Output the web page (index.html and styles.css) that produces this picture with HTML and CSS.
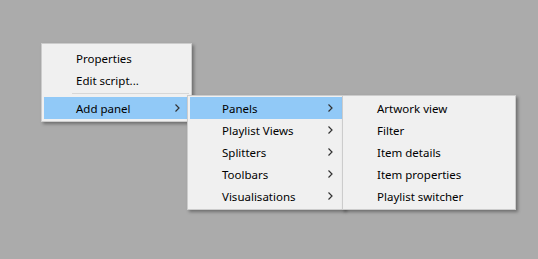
FILE: index.html
```html
<!DOCTYPE html>
<html>
<head>
<meta charset="utf-8">
<link rel="stylesheet" href="styles.css">
</head>
<body>
<div class="canvas">
  <div class="menu menu-main">
    <div class="item"><span class="label">Properties</span></div>
    <div class="item"><span class="label">Edit script...</span></div>
    <div class="sep"></div>
    <div class="item active"><span class="label">Add panel</span>
      <svg class="arrow" width="5" height="8" viewBox="0 0 5 8"><path d="M0.5 0.5 L4 4 L0.5 7.5" fill="none" stroke="#333" stroke-width="1.2"/></svg>
    </div>
  </div>
  <div class="menu menu-sub">
    <div class="item active"><span class="label">Panels</span>
      <svg class="arrow" width="5" height="8" viewBox="0 0 5 8"><path d="M0.5 0.5 L4 4 L0.5 7.5" fill="none" stroke="#333" stroke-width="1.2"/></svg>
    </div>
    <div class="item"><span class="label">Playlist Views</span>
      <svg class="arrow" width="5" height="8" viewBox="0 0 5 8"><path d="M0.5 0.5 L4 4 L0.5 7.5" fill="none" stroke="#333" stroke-width="1.2"/></svg>
    </div>
    <div class="item"><span class="label">Splitters</span>
      <svg class="arrow" width="5" height="8" viewBox="0 0 5 8"><path d="M0.5 0.5 L4 4 L0.5 7.5" fill="none" stroke="#333" stroke-width="1.2"/></svg>
    </div>
    <div class="item"><span class="label">Toolbars</span>
      <svg class="arrow" width="5" height="8" viewBox="0 0 5 8"><path d="M0.5 0.5 L4 4 L0.5 7.5" fill="none" stroke="#333" stroke-width="1.2"/></svg>
    </div>
    <div class="item"><span class="label">Visualisations</span>
      <svg class="arrow" width="5" height="8" viewBox="0 0 5 8"><path d="M0.5 0.5 L4 4 L0.5 7.5" fill="none" stroke="#333" stroke-width="1.2"/></svg>
    </div>
  </div>
  <div class="menu menu-panels">
    <div class="item"><span class="label">Artwork view</span></div>
    <div class="item"><span class="label">Filter</span></div>
    <div class="item"><span class="label">Item details</span></div>
    <div class="item"><span class="label">Item properties</span></div>
    <div class="item"><span class="label">Playlist switcher</span></div>
  </div>
</div>
</body>
</html>
```
FILE: styles.css
```css
html, body {
  margin: 0;
  padding: 0;
  background: #ababab;
}
.canvas {
  position: relative;
  width: 538px;
  height: 259px;
  overflow: hidden;
  font-family: "Noto Sans", "Open Sans", sans-serif;
  font-size: 11.5px;
  color: #000;
}
.menu {
  position: absolute;
  box-sizing: border-box;
  background: #f0f0f0;
  border: 1px solid #cccccc;
  padding: 2px 2px;
  box-shadow: 2px 2px 3px rgba(0, 0, 0, 0.35);
}
.menu-main {
  left: 41px;
  top: 43px;
  width: 151px;
  padding-top: 3px;
  z-index: 0;
}
.menu-sub {
  left: 187px;
  top: 95px;
  width: 158px;
  padding-top: 1px;
  z-index: 1;
}
.menu-panels {
  left: 342px;
  top: 95px;
  width: 174px;
  padding-top: 1px;
  z-index: 2;
}
.item {
  height: 22px;
  display: flex;
  align-items: center;
  padding-left: 32px;
  padding-right: 9px;
  white-space: nowrap;
}
.item .label {
  flex: 1;
}
.item.active {
  background: #91c9f7;
}
.arrow {
  display: block;
}
.menu-sub .item { padding-right: 9px; padding-left: 32px; }
.menu-panels .item { padding-left: 32px; }
.sep {
  height: 1px;
  background: #d7d7d7;
  margin: 2px 0 3px 28px;
}
```
